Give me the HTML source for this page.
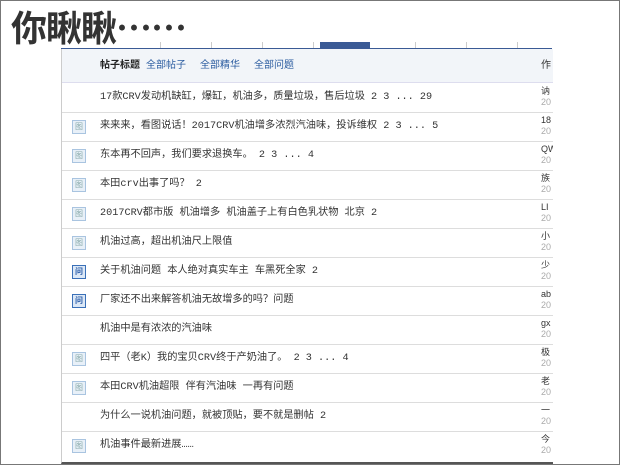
<!DOCTYPE html>
<html><head><meta charset="utf-8"><style>
body{margin:0;width:620px;height:465px;overflow:hidden;background:#fff;font-family:"Liberation Sans","Noto Sans CJK SC",sans-serif;position:relative}
.frame{position:absolute;left:0;top:0;width:618px;height:463px;border:1px solid #777}
.title{position:absolute;left:11px;top:4px;font-size:36px;font-weight:bold;color:#333;letter-spacing:-1px;font-family:"Noto Sans CJK SC",sans-serif;line-height:44px}
.shot{position:absolute;left:61px;top:49px;width:491px;height:413px;border-left:1px solid #ccc;border-bottom:2px solid #555;overflow:hidden}
.bl{position:absolute;left:61px;top:48px;width:491px;height:2px;background:#3a5a95}
.hdr{position:absolute;left:0;top:0;width:491px;height:33px;background:#f2f5f9;border-bottom:1px solid #dde;font-size:10px;line-height:33px}
.hdr b{position:absolute;left:38px;color:#222}
.hdr span{position:absolute;color:#2b5ca0}
.row{position:absolute;left:0;width:491px;height:29px;border-bottom:1px solid #ddd;color:#333;line-height:29px}
.row .t{position:absolute;left:38px;white-space:nowrap;font-family:"Liberation Mono","Noto Sans CJK SC",monospace;font-size:10.2px}
.ic{position:absolute;left:10px;top:8px;width:12px;height:12px;border:1px solid #a9c4e0;background:#e8f0f8;font-size:8px;line-height:12px;text-align:center;color:#8aa;}
.ic.q{border-color:#3a70b8;background:#dce8f6;color:#2a5ca8;font-weight:bold}
.a{position:absolute;left:479px;top:3px;font-size:9px;line-height:11px;color:#333}
.a i{font-style:normal;color:#aaa;display:block}
</style></head><body>
<div class="frame"></div>
<div style="position:absolute;left:110px;top:42px;width:442px;height:6px;background:repeating-linear-gradient(90deg,#fff 0,#fff 50px,#ccc 50px,#ccc 51px)"></div>
<div style="position:absolute;left:320px;top:42px;width:50px;height:6px;background:#3a5a95"></div>
<div class="bl"></div>
<div class="title">你瞅瞅……</div>
<div class="shot">
<div class="hdr"><b>帖子标题</b><span style="left:84px">全部帖子</span><span style="left:138px">全部精华</span><span style="left:192px">全部问题</span><span style="left:479px;color:#333">作</span></div>
<div class="row" style="top:34px"><span class="t">17款CRV发动机缺缸，爆缸，机油多，质量垃圾，售后垃圾 2 3 ... 29</span><div class="a">讷<i>20</i></div></div>
<div class="row" style="top:63px"><div class="ic">图</div><span class="t">来来来，看图说话！2017CRV机油增多浓烈汽油味，投诉维权 2 3 ... 5</span><div class="a">18<i>20</i></div></div>
<div class="row" style="top:92px"><div class="ic">图</div><span class="t">东本再不回声，我们要求退换车。 2 3 ... 4</span><div class="a">QW<i>20</i></div></div>
<div class="row" style="top:121px"><div class="ic">图</div><span class="t">本田crv出事了吗？ 2</span><div class="a">族<i>20</i></div></div>
<div class="row" style="top:150px"><div class="ic">图</div><span class="t">2017CRV都市版 机油增多 机油盖子上有白色乳状物 北京 2</span><div class="a">LI<i>20</i></div></div>
<div class="row" style="top:179px"><div class="ic">图</div><span class="t">机油过高，超出机油尺上限值</span><div class="a">小<i>20</i></div></div>
<div class="row" style="top:208px"><div class="ic q">问</div><span class="t">关于机油问题 本人绝对真实车主 车黑死全家 2</span><div class="a">少<i>20</i></div></div>
<div class="row" style="top:237px"><div class="ic q">问</div><span class="t">厂家还不出来解答机油无故增多的吗？问题</span><div class="a">ab<i>20</i></div></div>
<div class="row" style="top:266px"><span class="t">机油中是有浓浓的汽油味</span><div class="a">gx<i>20</i></div></div>
<div class="row" style="top:295px"><div class="ic">图</div><span class="t">四平（老K）我的宝贝CRV终于产奶油了。 2 3 ... 4</span><div class="a">极<i>20</i></div></div>
<div class="row" style="top:324px"><div class="ic">图</div><span class="t">本田CRV机油超限 伴有汽油味 一再有问题</span><div class="a">老<i>20</i></div></div>
<div class="row" style="top:353px"><span class="t">为什么一说机油问题，就被顶贴，要不就是删帖 2</span><div class="a">一<i>20</i></div></div>
<div class="row" style="top:382px;border:0"><div class="ic">图</div><span class="t">机油事件最新进展……</span><div class="a">今<i>20</i></div></div>
</div>
</body></html>
